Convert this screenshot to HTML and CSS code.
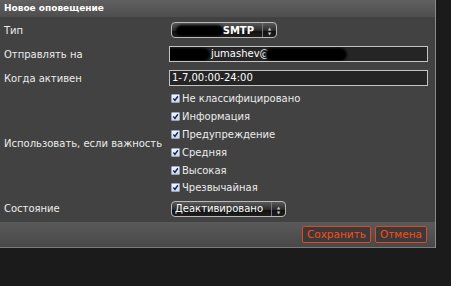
FILE: index.html
```html
<!DOCTYPE html>
<html lang="ru">
<head>
    <meta charset="UTF-8">
    <title>Новое оповещение</title>
    <link rel="stylesheet" href="styles.css">
</head>
<body>
    <div class="panel">
        <div class="panel-header">Новое оповещение</div>

        <div class="form">
            <div class="label">Тип</div>
            <div class="field">
                <div class="select select-type">
                    <span class="select-value">SMTP</span>
                    <span class="select-arrows">&#9650;<br>&#9660;</span>
                    <span class="redact redact-type"></span>
                </div>
            </div>

            <div class="label">Отправлять на</div>
            <div class="field">
                <div class="input input-mail">
                    <span class="input-text">jumashev@</span>
                    <span class="redact redact-mail-a"></span>
                    <span class="redact redact-mail-b"></span>
                </div>
            </div>

            <div class="label">Когда активен</div>
            <div class="field">
                <div class="input"><span class="input-text">1-7,00:00-24:00</span></div>
            </div>

            <div class="label">Использовать, если важность</div>
            <div class="field checks">
                <label class="check"><span class="box"><svg viewBox="0 0 9 9"><path d="M1.8 4.6 L3.8 6.9 L7.6 1.6" /></svg></span>Не классифицировано</label>
                <label class="check"><span class="box"><svg viewBox="0 0 9 9"><path d="M1.8 4.6 L3.8 6.9 L7.6 1.6" /></svg></span>Информация</label>
                <label class="check"><span class="box"><svg viewBox="0 0 9 9"><path d="M1.8 4.6 L3.8 6.9 L7.6 1.6" /></svg></span>Предупреждение</label>
                <label class="check"><span class="box"><svg viewBox="0 0 9 9"><path d="M1.8 4.6 L3.8 6.9 L7.6 1.6" /></svg></span>Средняя</label>
                <label class="check"><span class="box"><svg viewBox="0 0 9 9"><path d="M1.8 4.6 L3.8 6.9 L7.6 1.6" /></svg></span>Высокая</label>
                <label class="check"><span class="box"><svg viewBox="0 0 9 9"><path d="M1.8 4.6 L3.8 6.9 L7.6 1.6" /></svg></span>Чрезвычайная</label>
            </div>

            <div class="label">Состояние</div>
            <div class="field">
                <div class="select select-state">
                    <span class="select-value">Деактивировано</span>
                    <span class="select-arrows">&#9650;<br>&#9660;</span>
                </div>
            </div>
        </div>

        <div class="panel-footer">
            <button class="btn">Сохранить</button>
            <button class="btn">Отмена</button>
        </div>
    </div>
</body>
</html>
```

FILE: styles.css
```css
* {
    margin: 0;
    padding: 0;
    box-sizing: border-box;
}

body {
    background: #1b1b1b;
    font-family: 'DejaVu Sans', Verdana, sans-serif;
    font-size: 10px;
    color: #ececec;
    width: 451px;
    height: 286px;
    overflow: hidden;
}

.panel {
    width: 436px;
    background: #424242;
    border-right: 1px solid #8a8a8a;
}

.panel-header {
    height: 17px;
    padding-left: 4px;
    line-height: 16px;
    font-weight: bold;
    font-size: 9px;
    color: #fff;
    background: linear-gradient(#606060, #4e4e4e);
}

.form {
    display: grid;
    grid-template-columns: 165px 259px;
    row-gap: 8px;
    align-items: center;
    padding: 5px 0 5px 4px;
}

.label {
    white-space: nowrap;
}

.field {
    position: relative;
}

/* selects */
.select {
    position: relative;
    display: flex;
    align-items: center;
    justify-content: flex-end;
    height: 16px;
    margin-left: 2px;
    border: 1px solid #b8b8b8;
    border-radius: 4px;
    background: linear-gradient(#5a5a5a, #2a2a2a 55%, #111 56%, #1e1e1e);
    color: #fff;
    overflow: hidden;
}

.select-type { width: 106px; }
.select-state { width: 115px; }

.select-value {
    padding-right: 8px;
}

.select-type .select-value {
    font-weight: bold;
}

.select-arrows {
    width: 14px;
    height: 100%;
    border-left: 1px solid #777;
    font-size: 4px;
    line-height: 5px;
    text-align: center;
    padding-top: 3px;
    color: #ccc;
}

/* text inputs */
.input {
    position: relative;
    height: 16px;
    border: 1px solid #c4c4c4;
    background: #252525;
    line-height: 14px;
    padding-left: 2px;
    overflow: hidden;
}

.input-text {
    color: #fff;
}

.input-mail {
    padding-left: 41px;
}

/* redaction blobs */
.redact {
    position: absolute;
    background: #000;
    border-radius: 7px;
    filter: blur(1px);
}

.redact-type {
    left: 4px;
    top: 2px;
    width: 47px;
    height: 11px;
}

.redact-mail-a {
    left: -6px;
    top: 1px;
    width: 46px;
    height: 13px;
}

.redact-mail-b {
    left: 95px;
    top: 1px;
    width: 82px;
    height: 13px;
}

/* checkboxes */
.checks {
    margin: -4px 0;
    padding-left: 2px;
}

.check {
    display: flex;
    align-items: center;
    height: 17.8px;
}

.box {
    width: 9px;
    height: 9px;
    margin-right: 2px;
    background: linear-gradient(#f2f6ff, #c9d6ee);
    border: 1px solid #9aa6bd;
    border-radius: 1px;
}

.box svg {
    display: block;
    width: 7px;
    height: 7px;
    fill: none;
    stroke: #15234d;
    stroke-width: 1.8;
}

/* footer */
.panel-footer {
    display: flex;
    justify-content: flex-end;
    align-items: center;
    gap: 4px;
    height: 26px;
    padding-right: 8px;
    background: linear-gradient(#5a5a5a, #484848);
    border-bottom: 1px solid #7a7a7a;
}

.btn {
    height: 17px;
    padding: 0 4px;
    font-family: inherit;
    font-size: 10.5px;
    color: #ff4a17;
    background: #3a3a3a;
    border: 1px solid #e2471d;
    border-radius: 2px;
}
```
